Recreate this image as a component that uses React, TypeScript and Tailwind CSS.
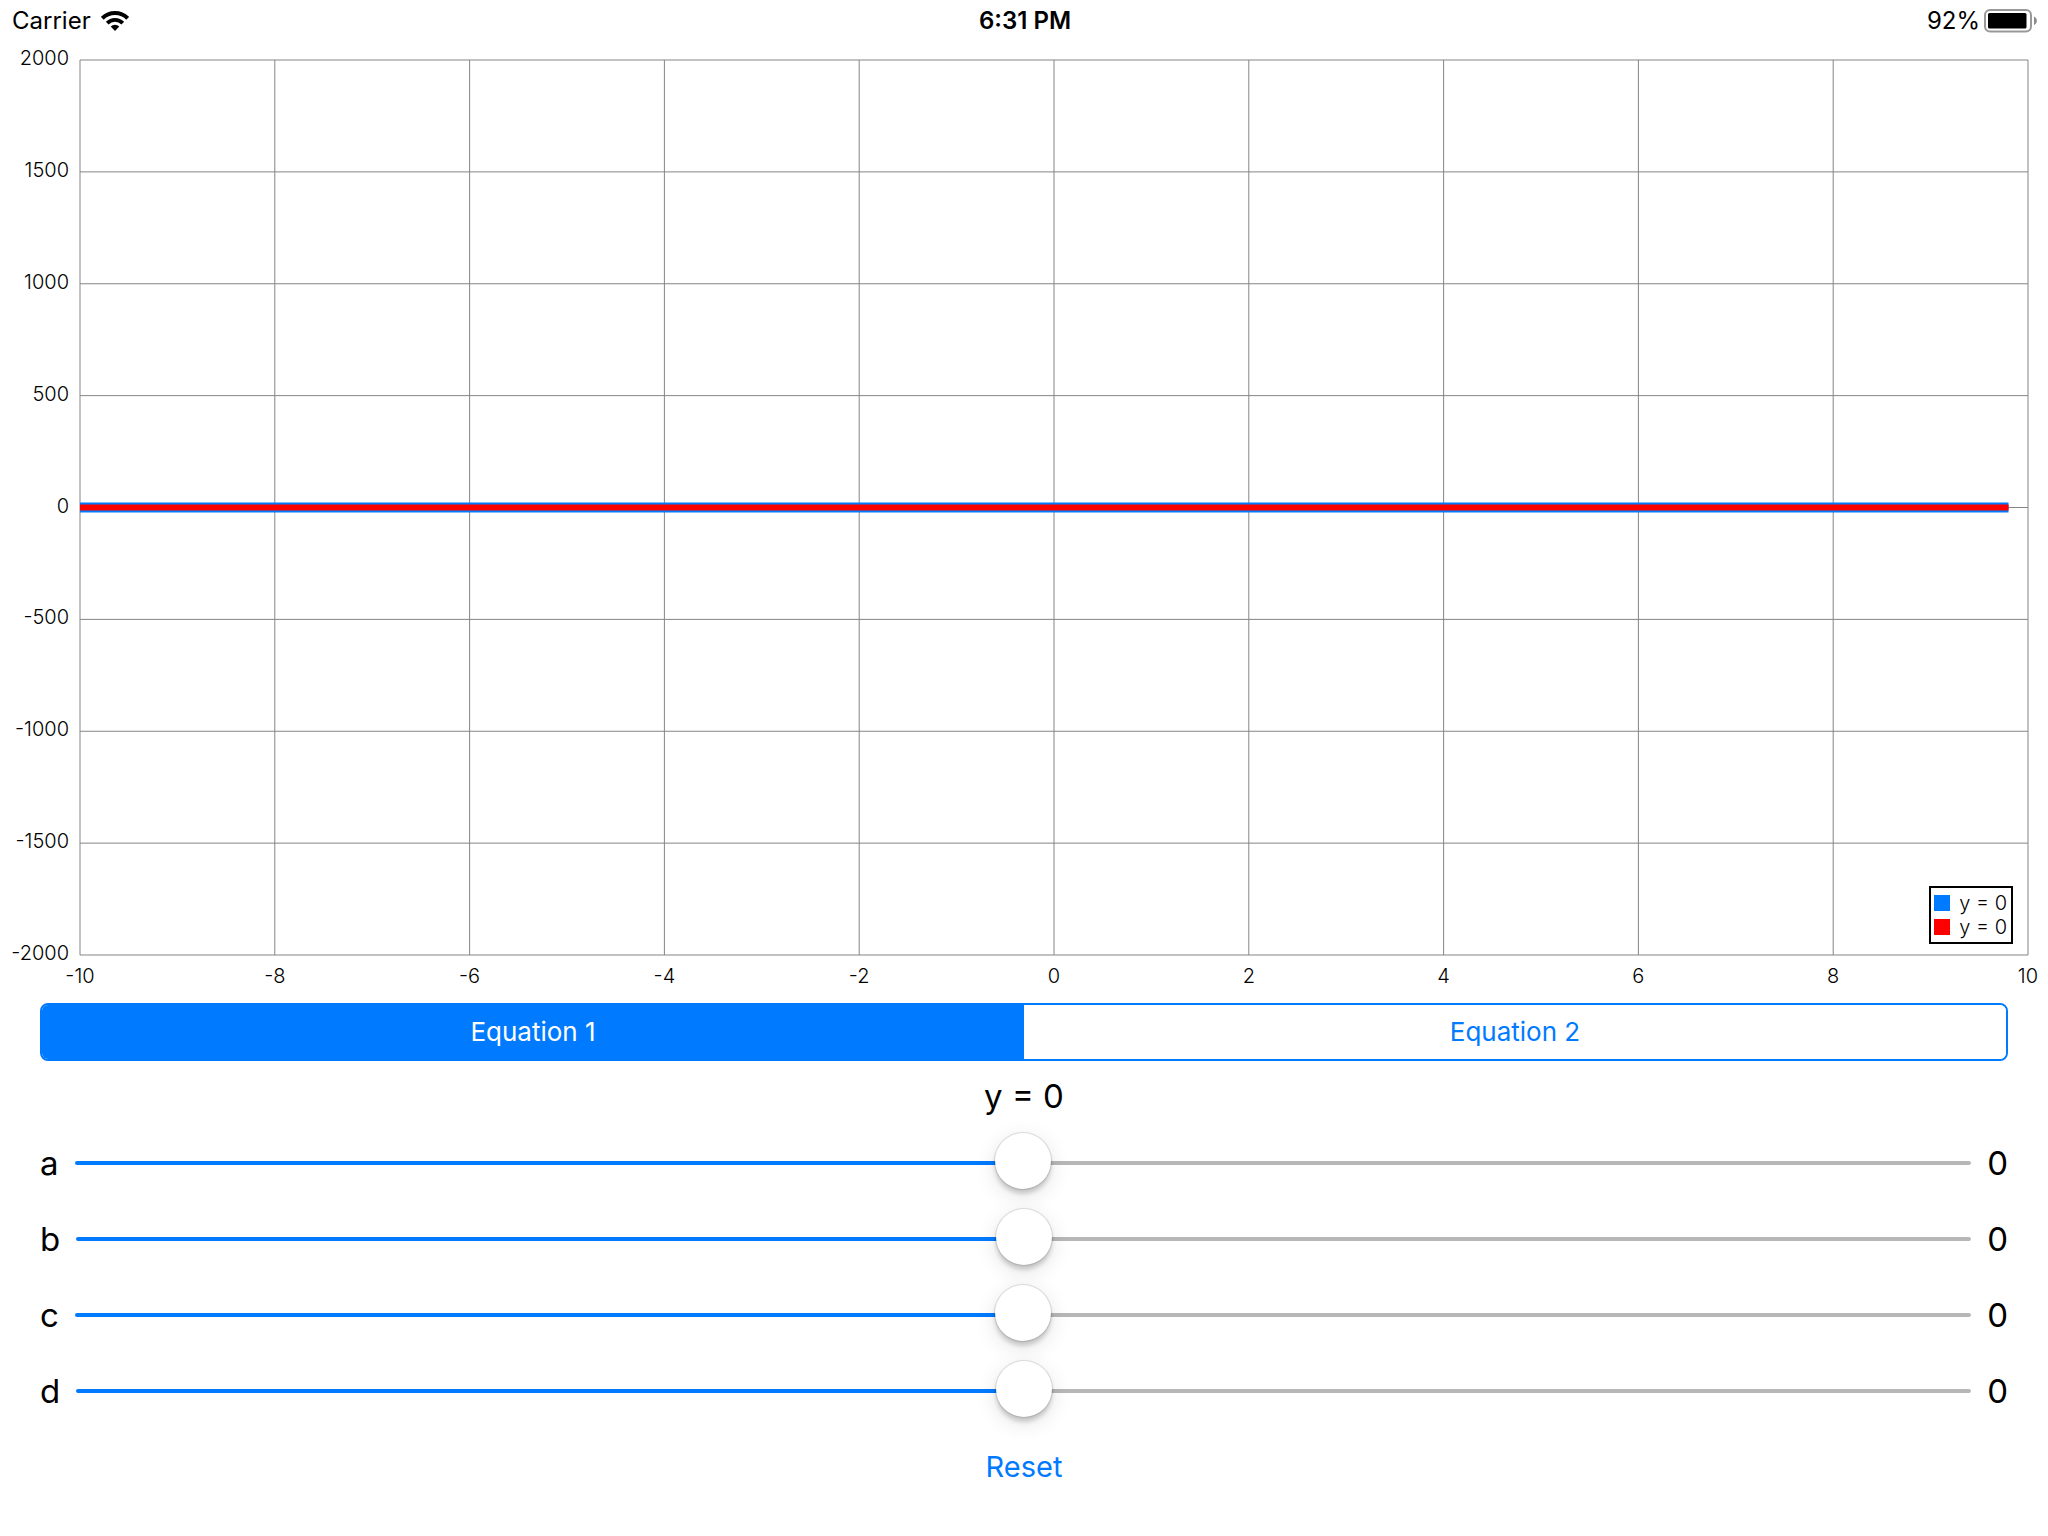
import { useState } from "react";

const Y_TICKS = [2000, 1500, 1000, 500, 0, -500, -1000, -1500, -2000];
const X_TICKS = [-10, -8, -6, -4, -2, 0, 2, 4, 6, 8, 10];
const COEFS = ["a", "b", "c", "d"];
const COLORS = ["#007aff", "#ff0000"];
const WIDTHS = [10, 6];
const STEP = 0.2;
const EMPTY = [0, 0, 0, 0];

function evaluate(coefs: number[], x: number) {
  return coefs.reduce((acc, c) => acc * x + c, 0);
}

function curvePoints(coefs: number[]) {
  return Array.from({ length: 100 }, (_, i) => {
    const x = -10 + i * STEP;
    return `${x.toFixed(1)},${-evaluate(coefs, x)}`;
  }).join(" ");
}

function equationText(coefs: number[]) {
  const powers = ["x³", "x²", "x", ""];
  const terms = coefs.map((c, i) => (c === 0 ? "" : `${c}${powers[i]}`)).filter(Boolean);
  return `y = ${terms.length ? terms.join(" + ") : "0"}`;
}

function StatusBar() {
  return (
    <header className="grid grid-cols-[1fr_auto_1fr] items-center h-10 pt-0.5 pl-3 pr-[10px] text-2xl">
      <div className="flex items-center gap-[10px]">
        <span>Carrier</span>
        <svg width="28" height="20" viewBox="0 0 28 20" fill="none" stroke="#000">
          <path d="M1.3 7.3A18 18 0 0 1 26.7 7.3" strokeWidth="4" />
          <path d="M6.2 12.2A11 11 0 0 1 21.8 12.2" strokeWidth="3.8" />
          <path d="M9.7 15.6A6.2 6.2 0 0 1 18.3 15.6L14 20Z" fill="#000" stroke="none" />
        </svg>
      </div>
      <span className="font-semibold">6:31 PM</span>
      <div className="flex items-center justify-end gap-1">
        <span>92%</span>
        <svg width="54" height="24" viewBox="0 0 54 24">
          <rect x="1" y="1" width="46" height="21.5" rx="5" fill="none" stroke="#999" strokeWidth="2" />
          <rect x="4" y="4" width="38.5" height="15.5" rx="1.5" fill="#000" />
          <path d="M50 7.5A4.6 4.6 0 0 1 50 16Z" fill="#8c8c8c" />
        </svg>
      </div>
    </header>
  );
}

function Chart({ equations }: { equations: number[][] }) {
  return (
    <section className="flex-1 grid grid-cols-[80px_1fr] grid-rows-[1fr_40px] pt-5 pr-5 text-xl leading-6 font-light text-black">
      <div className="flex flex-col justify-between pr-[11px] pb-0.5 -mt-0.5 text-right">
        {Y_TICKS.map((t) => (
          <div key={t} className="flex h-0 items-center justify-end">
            {t}
          </div>
        ))}
      </div>
      <div className="relative">
        <svg className="absolute inset-0 size-full overflow-visible" stroke="#858585">
          {Y_TICKS.map((t, i) => {
            const y = `${(i / (Y_TICKS.length - 1)) * 100}%`;
            return <line key={t} x1="0" x2="100%" y1={y} y2={y} />;
          })}
          {X_TICKS.map((t, i) => {
            const x = `${(i / (X_TICKS.length - 1)) * 100}%`;
            return <line key={t} x1={x} x2={x} y1="0" y2="100%" />;
          })}
        </svg>
        <svg
          className="absolute inset-0 size-full"
          viewBox="-10 -2000 20 4000"
          preserveAspectRatio="none"
          fill="none"
        >
          {equations.map((coefs, e) => (
            <polyline
              key={e}
              points={curvePoints(coefs)}
              stroke={COLORS[e]}
              strokeWidth={WIDTHS[e]}
              vectorEffect="non-scaling-stroke"
            />
          ))}
        </svg>
        <ul className="absolute right-[15px] bottom-[11px] border-2 border-black bg-white pl-[3px] pr-1 py-[3px]">
          {equations.map((coefs, e) => (
            <li key={e} className="flex items-center gap-[9px]">
              <span className="size-4" style={{ backgroundColor: COLORS[e] }} />
              {equationText(coefs)}
            </li>
          ))}
        </ul>
      </div>
      <div className="col-start-2 flex justify-between pt-[9px]">
        {X_TICKS.map((t) => (
          <div key={t} className="flex w-0 justify-center">
            {t}
          </div>
        ))}
      </div>
    </section>
  );
}

interface SliderRowProps {
  name: string;
  value: number;
  onChange: (value: number) => void;
}

function SliderRow({ name, value, onChange }: SliderRowProps) {
  const fill = (value + 10) * 5;
  return (
    <div className="flex items-center gap-4 h-[76px] text-[33px] leading-10">
      <label htmlFor={`coef-${name}`}>{name}</label>
      <input
        id={`coef-${name}`}
        type="range"
        min={-10}
        max={10}
        value={value}
        onChange={(e) => onChange(Number(e.target.value))}
        style={{ "--track": `linear-gradient(to right, #007aff ${fill}%, #b7b7b7 ${fill}%)` } as React.CSSProperties}
        className="flex-1 min-w-0 h-15 appearance-none bg-transparent outline-none [&::-webkit-slider-runnable-track]:h-1 [&::-webkit-slider-runnable-track]:rounded-full [&::-webkit-slider-runnable-track]:[background:var(--track)] [&::-webkit-slider-thumb]:appearance-none [&::-webkit-slider-thumb]:size-14 [&::-webkit-slider-thumb]:-mt-7 [&::-webkit-slider-thumb]:rounded-full [&::-webkit-slider-thumb]:bg-white [&::-webkit-slider-thumb]:shadow-[0_0_1px_1px_rgba(0,0,0,0.12),0_5px_4px_rgba(0,0,0,0.16),0_6px_22px_rgba(0,0,0,0.12)]"
      />
      <output htmlFor={`coef-${name}`}>{value}</output>
    </div>
  );
}

export default function App() {
  const [selected, setSelected] = useState(0);
  const [equations, setEquations] = useState([EMPTY, EMPTY]);

  function update(index: number, value: number) {
    setEquations(
      equations.map((coefs, e) => (e === selected ? coefs.map((c, i) => (i === index ? value : c)) : coefs))
    );
  }

  function reset() {
    setEquations(equations.map((coefs, e) => (e === selected ? EMPTY : coefs)));
  }

  return (
    <main className="flex flex-col min-h-screen bg-white text-black font-['Inter','Liberation_Sans',sans-serif]">
      <StatusBar />
      <Chart equations={equations} />
      <section className="flex flex-col px-10 pt-2 pb-[49px]">
        <div className="flex h-[58px] rounded-lg border-2 border-[#007aff] overflow-hidden text-[26px] leading-8">
          {equations.map((_, e) => (
            <button
              key={e}
              type="button"
              aria-pressed={e === selected}
              onClick={() => setSelected(e)}
              className={e === selected ? "flex-1 bg-[#007aff] text-white" : "flex-1 bg-white text-[#007aff]"}
            >
              Equation {e + 1}
            </button>
          ))}
        </div>
        <h1 className="pt-[15px] pb-[9px] text-center text-[33px] leading-10">{equationText(equations[selected])}</h1>
        {COEFS.map((name, i) => (
          <SliderRow key={name} name={name} value={equations[selected][i]} onChange={(v) => update(i, v)} />
        ))}
        <button type="button" onClick={reset} className="self-center mt-[18px] text-[29px] leading-10 text-[#007aff]">
          Reset
        </button>
      </section>
    </main>
  );
}
